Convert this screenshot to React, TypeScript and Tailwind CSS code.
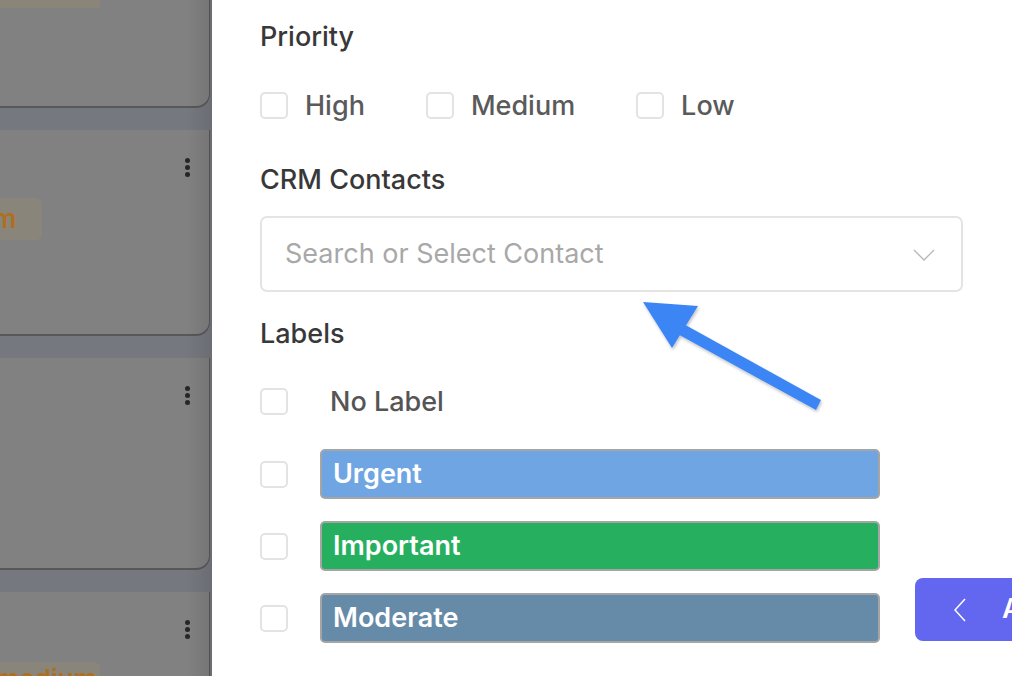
import React from "react";

// ─── Data ─────────────────────────────────────────────────────────────────────

const PRIORITIES = ["High", "Medium", "Low"];

const LABELS = [
  { name: "Urgent", color: "bg-[#6fa5e3]" },
  { name: "Important", color: "bg-[#26af5f]" },
  { name: "Moderate", color: "bg-[#668ba8]" },
];

// ─── Pieces ───────────────────────────────────────────────────────────────────

function Box() {
  return <span className="w-[28px] h-[27px] shrink-0 rounded-[5px] border-2 border-[#e3e3e3] bg-white" />;
}

function Dots() {
  return (
    <div className="flex flex-col gap-[2px] pt-[28px] pr-[19px] items-end">
      <span className="w-[5px] h-[5px] rounded-full bg-[#262626]" />
      <span className="w-[5px] h-[5px] rounded-full bg-[#262626]" />
      <span className="w-[5px] h-[5px] rounded-full bg-[#262626]" />
    </div>
  );
}

function Card({ height, children }: { height: string; children?: React.ReactNode }) {
  return (
    <div
      className={`${height} shrink-0 w-[210px] bg-[#818181] rounded-br-[14px] border-b-2 border-r border-[#585858] relative`}
    >
      {children}
    </div>
  );
}

function Arrow() {
  return (
    <svg className="absolute left-[636px] top-[296px]" width="196" height="122" viewBox="0 0 196 122">
      <defs>
        <filter id="sh" x="-20%" y="-20%" width="140%" height="140%">
          <feDropShadow dx="1" dy="2" stdDeviation="1.5" floodColor="#000" floodOpacity="0.25" />
        </filter>
      </defs>
      <g filter="url(#sh)" fill="#3b86f4">
        <polygon points="7,6 62,10 36,52" />
        <polygon points="44,26 185,104 180,114 38,36" />
      </g>
    </svg>
  );
}

// ─── App ──────────────────────────────────────────────────────────────────────

export default function App() {
  return (
    <div
      className="relative flex w-[1012px] h-[676px] overflow-hidden bg-white"
      style={{ fontFamily: "Inter, 'Noto Sans', sans-serif" }}
    >
      {/* Dimmed board behind the drawer */}
      <div className="w-[212px] shrink-0 h-full bg-[#75787e] flex flex-col gap-[22px] overflow-hidden relative">
        <Card height="h-[108px]">
          <span className="absolute left-0 top-0 w-[100px] h-[8px] bg-[#8a8479]" />
        </Card>
        <Card height="h-[206px]">
          <Dots />
          <span className="absolute left-0 top-[68px] w-[42px] h-[42px] rounded-r-md bg-[#8a857b] flex items-center text-[26px] font-semibold text-[#b06f1c] leading-none">
            <span className="-ml-[7px]">m</span>
          </span>
        </Card>
        <Card height="h-[212px]">
          <Dots />
        </Card>
        <Card height="h-[120px]">
          <Dots />
          <span className="absolute -left-[4px] top-[70px] w-[104px] h-[34px] rounded-md bg-[#8a857b] flex items-start text-[26px] font-semibold text-[#b06f1c] leading-none pt-[4px]">
            <span>medium</span>
          </span>
        </Card>
        <div className="absolute right-0 top-0 h-full w-[26px] bg-gradient-to-r from-transparent to-[#00000018]" />
      </div>

      {/* Drawer */}
      <div className="flex-1 min-w-0 pl-[48px] text-[#3a3a3a]">
        <h3 className="mt-[22px] text-[27px] leading-[30px] font-medium text-[#383838]">Priority</h3>

        <div className="mt-[38px] flex items-center h-[30px]">
          {PRIORITIES.map((p, i) => (
            <label key={p} className={`flex items-center gap-[17px] ${i > 0 ? "ml-[61px]" : ""}`}>
              <Box />
              <span className="text-[27px] font-medium text-[#5a5a5a] leading-none">{p}</span>
            </label>
          ))}
        </div>

        <h3 className="mt-[45px] text-[27px] leading-[30px] font-medium text-[#383838]">CRM Contacts</h3>

        <div className="mt-[21px] w-[703px] h-[76px] rounded-[7px] border-2 border-[#e4e4e4] flex items-center pl-[23px] pr-[26px]">
          <span className="flex-1 text-[27px] text-[#a8a8a8]">Search or Select Contact</span>
          <svg width="22" height="14" viewBox="0 0 22 14" className="mt-[2px] shrink-0">
            <polyline points="1,2 11,12 21,2" fill="none" stroke="#b8b8b8" strokeWidth="1.4" />
          </svg>
        </div>

        <h3 className="mt-[27px] text-[27px] leading-[30px] font-medium text-[#383838]">Labels</h3>

        <div className="mt-[37px] flex items-center h-[30px]">
          <Box />
          <span className="ml-[42px] text-[27px] font-medium text-[#555] leading-none">No Label</span>
        </div>

        <div className="mt-[33px] flex flex-col gap-[22px]">
          {LABELS.map((l, i) => (
            <div key={l.name} className="flex items-start">
              <div className="flex items-center gap-[32px] shrink-0">
                <Box />
                <div
                  className={`w-[560px] h-[50px] rounded-[5px] border-2 border-[#a5a5a5] ${l.color} flex items-center pl-[11px] text-[27px] font-semibold text-white`}
                >
                  {l.name}
                </div>
              </div>
              {i === LABELS.length - 1 && (
                <button className="ml-[35px] -mt-[15px] shrink-0 w-[200px] h-[63px] rounded-[8px] bg-[#6366ee] flex items-center pl-[39px] gap-[36px] text-white text-[27px] font-semibold">
                  <svg width="12" height="24" viewBox="0 0 12 24" className="shrink-0">
                    <polyline points="11,1 1,12 11,23" fill="none" stroke="#fff" strokeWidth="1.5" />
                  </svg>
                  <span>Apply</span>
                </button>
              )}
            </div>
          ))}
        </div>
      </div>

      <Arrow />
    </div>
  );
}
